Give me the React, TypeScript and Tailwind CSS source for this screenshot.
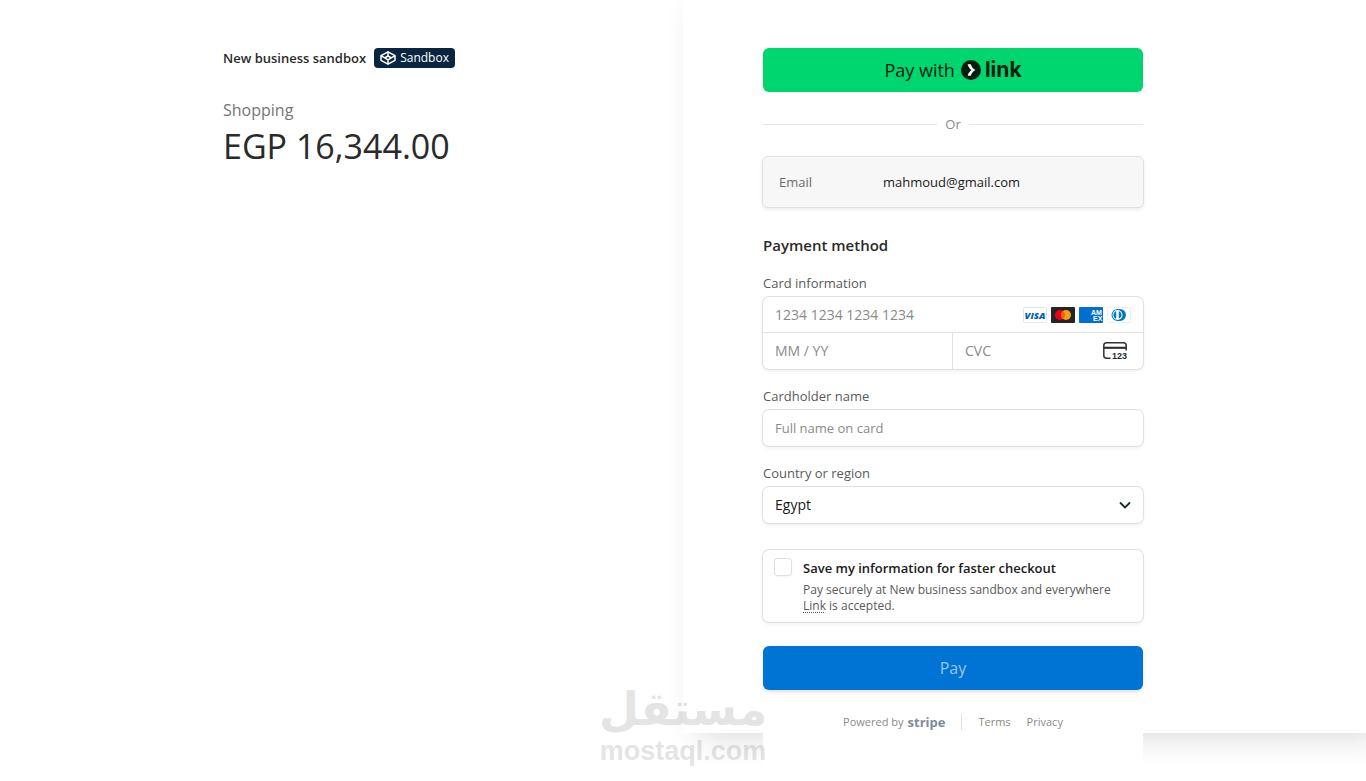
import { useState } from "react";
import type { ReactNode } from "react";

const boxClass =
  "rounded-md bg-white ring-1 ring-[#e0e0e0] shadow-[0_2px_4px_rgba(0,0,0,0.07)]";

const inputClass =
  "w-full min-w-0 bg-transparent px-3 leading-5 text-[#1a1a1a] placeholder:text-[#8a8a8a] outline-none";

const countries = ["Egypt", "Jordan", "Morocco", "Saudi Arabia", "United Arab Emirates"];

const footerLinks = ["Terms", "Privacy"];

function SandboxIcon() {
  return (
    <svg
      className="h-4 w-4"
      viewBox="0 0 16 16"
      fill="none"
      stroke="#fff"
      strokeWidth={1.5}
      strokeLinejoin="round"
      aria-hidden="true"
    >
      <path d="M8 1.8 15 5.7v4.6L8 14.2 1 10.3V5.7Z" />
      <path d="M1 5.7 8 9.8l7-4.1M4.6 8 8 6l3.4 2M8 1.8V6M8 9.8v4.4" />
    </svg>
  );
}

function LinkLogo() {
  return (
    <span className="flex items-center gap-1">
      <svg className="h-5 w-5" viewBox="0 0 20 20" aria-hidden="true">
        <circle cx="10" cy="10" r="10" fill="#011e0f" />
        <path
          d="M6.600 4.200h3.200c.6 2.500 2.400 4.600 4.700 5.800-2.300 1.200-4.100 3.300-4.700 5.800H6.600c.6-2.400 2-4.400 3.900-5.800-1.900-1.400-3.300-3.400-3.900-5.800Z"
          fill="#fff"
        />
      </svg>
      <span className="font-[Inter,sans-serif] text-[21px] leading-6 font-bold">link</span>
    </span>
  );
}

function VisaIcon() {
  return (
    <svg className="h-4 w-6" viewBox="0 0 24 16" role="img" aria-label="Visa">
      <rect x=".5" y=".5" width="23" height="15" rx="1" fill="#fff" stroke="#e6e6e6" />
      <text
        x="12"
        y="11.500"
        textAnchor="middle"
        fontFamily="Open Sans, sans-serif"
        fontSize="9.500"
        fontWeight="800"
        fontStyle="italic"
        fill="#0061b2"
      >
        VISA
      </text>
    </svg>
  );
}

function MastercardIcon() {
  return (
    <svg className="h-4 w-6" viewBox="0 0 24 16" role="img" aria-label="Mastercard">
      <rect width="24" height="16" rx="1" fill="#252525" />
      <circle cx="9" cy="8" r="5" fill="#eb001b" />
      <circle cx="15" cy="8" r="5" fill="#f79e1b" />
      <path d="M12 4a5 5 0 0 1 0 8 5 5 0 0 1 0-8Z" fill="#ff5f00" />
    </svg>
  );
}

function AmexIcon() {
  return (
    <svg className="h-4 w-6" viewBox="0 0 24 16" role="img" aria-label="American Express">
      <rect width="24" height="16" rx="1" fill="#006fcf" />
      <g fontFamily="Liberation Sans, Arial, sans-serif" fontSize="7" fontWeight="700" fill="#fff">
        <text x="12" y="8">AM</text>
        <text x="14" y="14">EX</text>
      </g>
    </svg>
  );
}

function DinersIcon() {
  return (
    <svg className="h-4 w-6" viewBox="0 0 24 16" role="img" aria-label="Diners Club">
      <rect x=".5" y=".5" width="23" height="15" rx="1" fill="#fff" stroke="#ededed" />
      <path d="M10.500 2h2.500a6 6 0 0 1 0 12h-2.500a6 6 0 0 1 0-12Z" fill="#0079be" />
      <circle cx="10.500" cy="8" r="5" fill="#fff" />
      <path d="M9.200 4.200v7.600a4 4 0 0 1 0-7.600ZM11.800 4.200a4 4 0 0 1 0 7.600Z" fill="#0079be" />
    </svg>
  );
}

function CvcIcon() {
  return (
    <svg className="h-5 w-6" viewBox="0 0 24 20" aria-hidden="true">
      <path
        d="M7.500 17.200H3.500A2.800 2.800 0 0 1 .8 14.400V4.600a2.800 2.800 0 0 1 2.700-2.800h17a2.800 2.800 0 0 1 2.700 2.800V9.500"
        fill="none"
        stroke="#303238"
        strokeWidth="1.500"
      />
      <path d="M1 6.800h22" stroke="#303238" strokeWidth="2.200" />
      <text
        x="9"
        y="18"
        fontFamily="Liberation Sans, Arial, sans-serif"
        fontSize="9"
        fontWeight="700"
        fill="#1a2b2b"
      >
        123
      </text>
    </svg>
  );
}

function Field({ id, label, children }: { id: string; label: string; children: ReactNode }) {
  return (
    <div className="mt-[19px]">
      <label htmlFor={id} className="mb-1.5 block text-[13px] leading-4 text-[#5a5a5a]">
        {label}
      </label>
      {children}
    </div>
  );
}

function Summary() {
  return (
    <section className="flex flex-1 justify-end px-20 pt-12">
      <div className="w-full max-w-[380px]">
        <div className="flex items-center gap-2">
          <span className="text-[13px] leading-5 font-semibold text-[#2a2a2a]">
            New business sandbox
          </span>
          <span className="flex h-5 items-center gap-1 rounded bg-[#0a2540] px-1.5 text-xs text-white">
            <SandboxIcon />
            Sandbox
          </span>
        </div>
        <h1 className="mt-8 text-base leading-5 font-medium text-[#757575]">Shopping</h1>
        <p className="text-[34px] leading-[52px] font-medium text-[#2a2a2a]">EGP 16,344.00</p>
      </div>
    </section>
  );
}

function PaymentForm() {
  const [save, setSave] = useState(false);

  return (
    <form className="relative w-full max-w-[380px] bg-white pt-12" onSubmit={(e) => e.preventDefault()}>
      <button
        type="button"
        className="flex h-11 w-full items-center justify-center gap-1.5 rounded-md bg-[#00d66f] text-lg font-medium text-[#011e0f]"
      >
        Pay with
        <LinkLogo />
      </button>

      <div className="my-6 flex items-center gap-2 text-[13px] leading-4 text-[#8a8a8a]">
        <span className="h-px flex-1 bg-[#e6e6e6]" />
        Or
        <span className="h-px flex-1 bg-[#e6e6e6]" />
      </div>

      <dl className="-mx-px flex rounded-md border border-[#e0e0e0] bg-[#f7f7f7] px-4 py-[15px] text-[13px] leading-5 shadow-[0_2px_4px_rgba(0,0,0,0.07)]">
        <dt className="w-[104px] text-[#6a6a6a]">Email</dt>
        <dd className="text-[#1a1a1a]">mahmoud@gmail.com</dd>
      </dl>

      <h2 className="mt-[26px] text-[15px] leading-[22px] font-semibold text-[#2a2a2a]">
        Payment method
      </h2>

      <Field id="card-number" label="Card information">
        <div className={`${boxClass} text-sm`}>
          <div className="flex h-9 items-center border-b border-[#e0e0e0] pr-3">
            <input id="card-number" className={inputClass} placeholder="1234 1234 1234 1234" />
            <div className="flex shrink-0 gap-1">
              <VisaIcon />
              <MastercardIcon />
              <AmexIcon />
              <DinersIcon />
            </div>
          </div>
          <div className="grid h-9 grid-cols-2">
            <input
              aria-label="Expiration"
              className={`${inputClass} border-r border-[#e0e0e0]`}
              placeholder="MM / YY"
            />
            <div className="flex min-w-0 items-center pr-4">
              <input aria-label="CVC" className={inputClass} placeholder="CVC" />
              <span className="shrink-0">
                <CvcIcon />
              </span>
            </div>
          </div>
        </div>
      </Field>

      <Field id="card-name" label="Cardholder name">
        <div className={`${boxClass} flex h-9 text-[13px]`}>
          <input id="card-name" className={inputClass} placeholder="Full name on card" />
        </div>
      </Field>

      <Field id="country" label="Country or region">
        <div className={`${boxClass} relative flex h-9 text-sm`}>
          <select id="country" className={`${inputClass} appearance-none`}>
            {countries.map((country) => (
              <option key={country}>{country}</option>
            ))}
          </select>
          <svg
            className="pointer-events-none absolute top-3 right-3 h-3 w-3"
            viewBox="0 0 12 12"
            fill="none"
            stroke="#1a2b2b"
            strokeWidth={1.8}
            strokeLinecap="round"
            aria-hidden="true"
          >
            <path d="m1.500 4 4.500 4.500L10.500 4" />
          </svg>
        </div>
      </Field>

      <div className={`${boxClass} mt-[27px] flex gap-3 px-3 py-2`}>
        <input
          id="save-info"
          type="checkbox"
          checked={save}
          onChange={(e) => setSave(e.target.checked)}
          className="mt-px h-4 w-4 shrink-0 appearance-none rounded-[3px] bg-white shadow-[0_1px_3px_rgba(0,0,0,0.1)] ring-1 ring-[#e0e0e0] checked:bg-[#0074d4]"
        />
        <div className="text-xs leading-4 text-[#5a5a5a]">
          <label
            htmlFor="save-info"
            className="mb-1 block text-[13px] leading-5 font-semibold text-[#1a1a1a]"
          >
            Save my information for faster checkout
          </label>
          <p>
            Pay securely at New business sandbox and everywhere{" "}
            <a href="#link" className="underline decoration-dotted underline-offset-2">
              Link
            </a>{" "}
            is accepted.
          </p>
        </div>
      </div>

      <button
        type="submit"
        className="mt-6 h-11 w-full rounded-md bg-[#0074d4] text-base font-medium text-white/60 shadow-[0_2px_4px_rgba(0,0,0,0.12)]"
      >
        Pay
      </button>

      <footer className="mt-6 flex items-center justify-center text-[11px] leading-4 text-[#8a8a8a]">
        <a href="#stripe" className="flex items-center gap-1 border-r border-[#e0e0e0] pr-4">
          Powered by
          <span className="text-[13px] leading-4 font-bold text-[#7f8b97]">stripe</span>
        </a>
        {footerLinks.map((label) => (
          <a key={label} href={`#${label.toLowerCase()}`} className="ml-4">
            {label}
          </a>
        ))}
      </footer>
    </form>
  );
}

function Watermark() {
  return (
    <div className="pointer-events-none absolute inset-x-0 bottom-4 flex flex-col items-center font-bold text-black opacity-10">
      <span
        lang="ar"
        dir="rtl"
        className="font-['DejaVu_Sans',sans-serif] text-[46px] leading-[56px]"
      >
        مستقل
      </span>
      <span className="font-['Liberation_Sans',Arial,sans-serif] text-[27px] leading-7">
        mostaql.com
      </span>
    </div>
  );
}

export default function App() {
  return (
    <main className="relative flex min-h-screen overflow-hidden bg-white font-['Open_Sans','Segoe_UI',sans-serif]">
      <Summary />
      <section className="relative flex flex-1 px-20">
        <div className="absolute inset-x-0 top-0 bottom-12 bg-white shadow-[15px_4px_30px_rgba(0,0,0,0.15)]" />
        <PaymentForm />
      </section>
      <Watermark />
    </main>
  );
}
